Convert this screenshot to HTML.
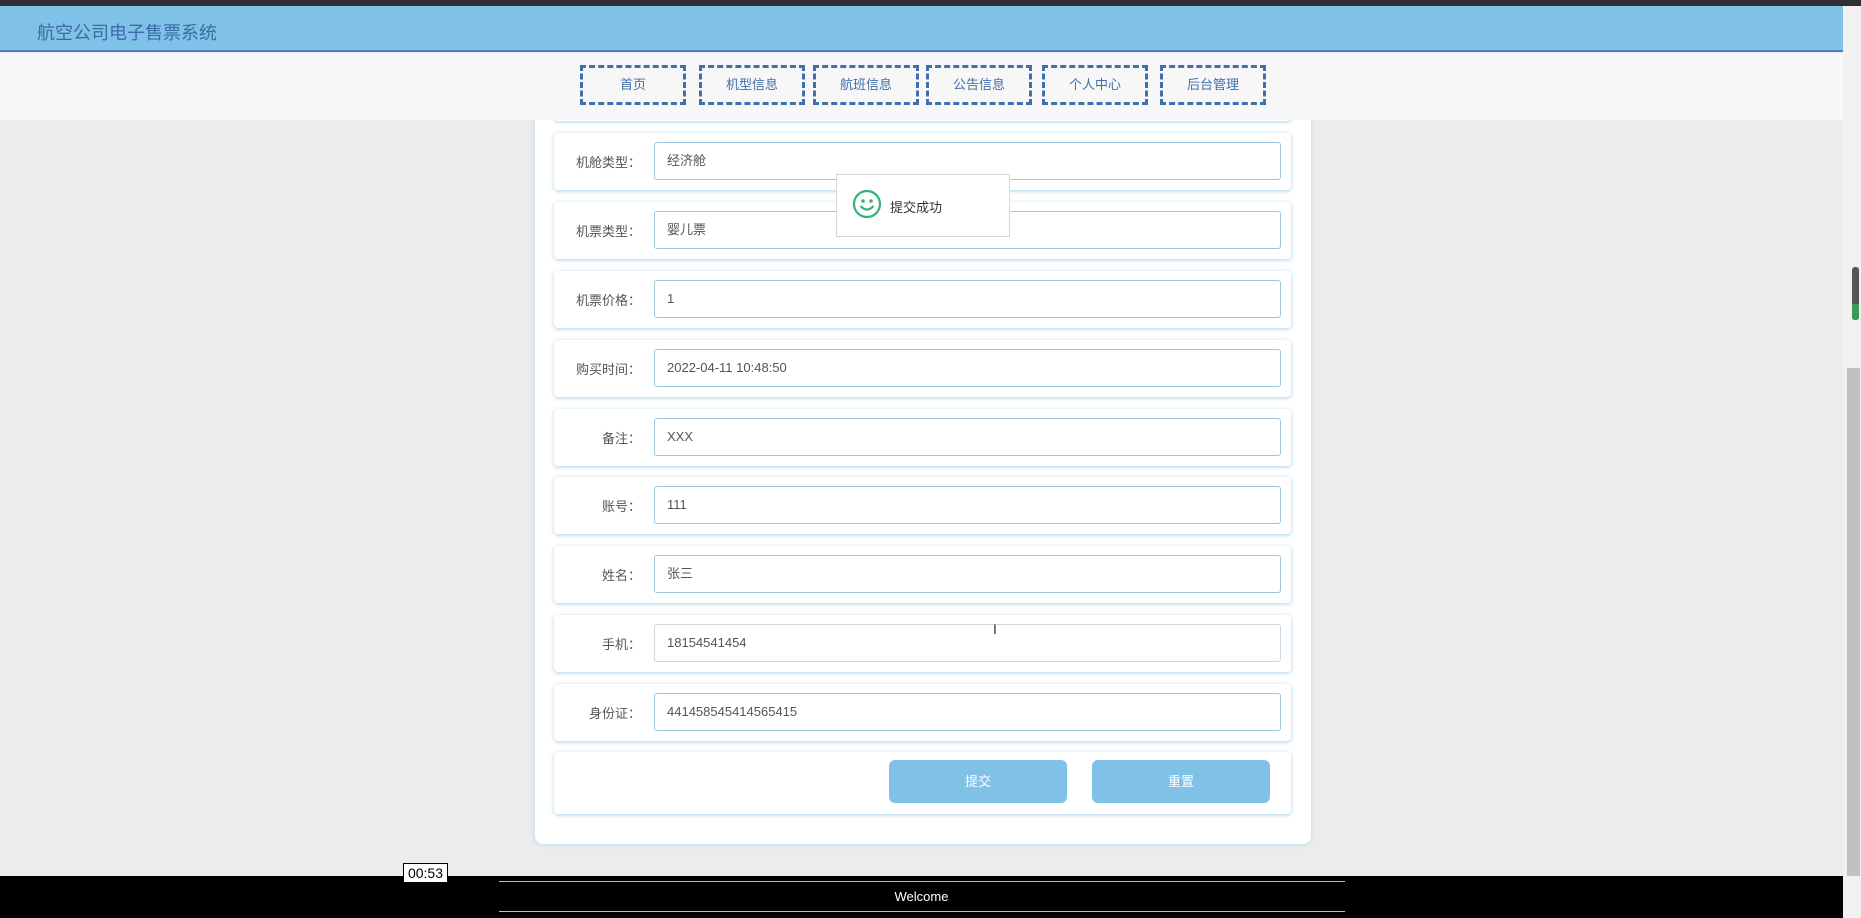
<!DOCTYPE html>
<html><head><meta charset="utf-8"><style>
*{margin:0;padding:0;box-sizing:border-box}
body{width:1861px;height:918px;overflow:hidden;background:#ececec;position:relative;font-family:"Liberation Sans","Noto Sans CJK SC",sans-serif}
.a{position:absolute}
.topbar{left:0;top:0;width:1861px;height:6px;background:#2f3033}
.head{left:0;top:6px;width:1843px;height:46px;background:#80c1e7;border-bottom:2px solid #4a7cbf}
.head span{position:absolute;left:37px;top:13px;font-size:18px;color:#3c6aa7}
.nav{left:0;top:53px;width:1843px;height:67px;background:#f7f7f7}
.nb{position:absolute;top:12px;width:106px;height:40px;border:3px dashed #3f6fad;font-size:13px;color:#3f6fad;text-align:center;line-height:34px}
.panel{left:535px;top:110px;width:776px;height:734px;background:#fff;border-radius:8px;box-shadow:0 0 6px #b9d8ec}
.row{position:absolute;left:554px;width:737px;height:57px;background:#fff;border-radius:4px;box-shadow:0 1px 4px #a9d0ea}
.lab{position:absolute;right:650px;top:19px;font-size:13px;color:#555;white-space:nowrap}
.inp{position:absolute;left:100px;top:9px;width:627px;height:38px;border:1px solid #9cc7df;border-radius:3px;font-size:13px;color:#555;padding-left:12px;line-height:36px}
.btn{position:absolute;top:8px;width:178px;height:43px;background:#80c1e7;border-radius:6px;color:#fff;font-size:13px;text-align:center;line-height:43px}
.foot{left:0;top:876px;width:1843px;height:42px;background:#000}
.line{position:absolute;left:499px;width:846px;height:1px;background:#bbb}
</style></head><body>
<div class="a topbar"></div>
<div class="a head"><span>航空公司电子售票系统</span></div>
<div class="a panel"></div>
<div class="row a" style="top:64px;height:57px"></div>
<div class="row" style="top:133px"><div class="lab">机舱类型：</div><div class="inp">经济舱</div></div>
<div class="row" style="top:202px"><div class="lab">机票类型：</div><div class="inp">婴儿票</div></div>
<div class="row" style="top:271px"><div class="lab">机票价格：</div><div class="inp">1</div></div>
<div class="row" style="top:340px"><div class="lab">购买时间：</div><div class="inp">2022-04-11 10:48:50</div></div>
<div class="row" style="top:409px"><div class="lab">备注：</div><div class="inp">XXX</div></div>
<div class="row" style="top:477px"><div class="lab">账号：</div><div class="inp">111</div></div>
<div class="row" style="top:546px"><div class="lab">姓名：</div><div class="inp">张三</div></div>
<div class="row" style="top:615px"><div class="lab">手机：</div><div class="inp" style="border-color:#cfd8de">18154541454</div></div>
<div class="row" style="top:684px"><div class="lab">身份证：</div><div class="inp">441458545414565415</div></div>
<div class="row" style="top:752px;height:62px"><div class="btn" style="left:335px">提交</div><div class="btn" style="left:538px">重置</div></div>
<div class="a nav">
<div class="nb" style="left:580px">首页</div>
<div class="nb" style="left:699px">机型信息</div>
<div class="nb" style="left:813px">航班信息</div>
<div class="nb" style="left:926px">公告信息</div>
<div class="nb" style="left:1042px">个人中心</div>
<div class="nb" style="left:1160px">后台管理</div>
</div>
<div class="a" style="left:836px;top:174px;width:174px;height:63px;background:#fff;border:1px solid #d6d6d6">
<svg class="a" style="left:15px;top:14px" width="30" height="30" viewBox="0 0 30 30"><circle cx="15" cy="15" r="13" fill="none" stroke="#2fb57b" stroke-width="2.2"/><circle cx="11" cy="12" r="1.8" fill="#2fb57b"/><circle cx="19" cy="12" r="1.8" fill="#2fb57b"/><path d="M8.5 17 Q15 24 21.5 17" fill="none" stroke="#2fb57b" stroke-width="2.2"/></svg>
<span class="a" style="left:53px;top:22px;font-size:13px;color:#333">提交成功</span></div>
<div class="a" style="left:993px;top:622px;width:8px;height:15px;font-size:14px;color:#333;line-height:15px">I</div>
<div class="a foot"><div class="line" style="top:5px"></div><div class="line" style="top:35px"></div>
<div class="a" style="left:0;width:1843px;top:13px;text-align:center;color:#fff;font-size:13px">Welcome</div></div>
<div class="a" style="left:403px;top:863px;width:45px;height:20px;background:#fff;border:1px solid #000;font-size:14px;text-align:center;line-height:18px;color:#000">00:53</div>
<div class="a" style="left:1843px;top:6px;width:18px;height:912px;background:#f1f1f1"></div>
<div class="a" style="left:1847px;top:368px;width:13px;height:508px;background:#c1c1c1"></div>
<div class="a" style="left:1852px;top:267px;width:7px;height:53px;background:#555;border-radius:3px"></div>
<div class="a" style="left:1852px;top:304px;width:7px;height:16px;background:#3a9a5a;border-radius:0 0 3px 3px"></div>
</body></html>
